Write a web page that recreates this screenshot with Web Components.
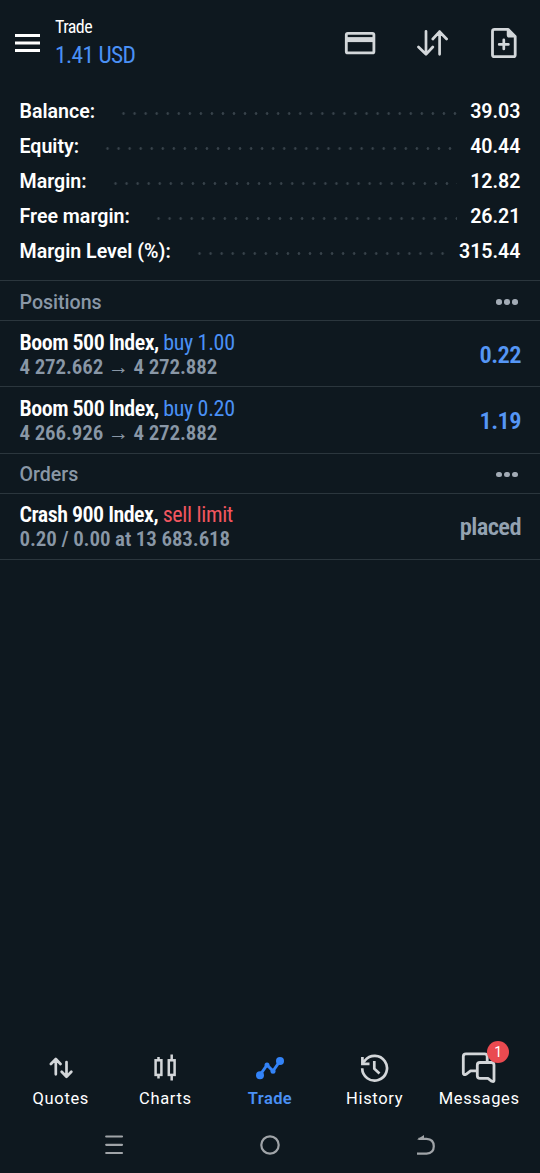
<!DOCTYPE html>
<html lang="en">
<head>
<meta charset="utf-8">
<meta name="viewport" content="width=device-width, initial-scale=1">
<title>Trade</title>
<style>
    body {
        margin: 0;
        background: #0e181f;
        font-family: Roboto, "Liberation Sans", sans-serif;
        color: #fff;
    }
</style>
</head>
<body>
<trade-app></trade-app>

<script>
const condensed = `font-family: "Roboto Condensed", Roboto, sans-serif; font-stretch: 75%;`;

const icons = {
    menu: `<svg width="26" height="18" viewBox="0 0 26 18" stroke="#fff" stroke-width="3"><path d="M0 1.5H25M0 9H25M0 16.5H25"/></svg>`,
    card: `<svg width="32" height="24" viewBox="0 0 32 24" fill="none" stroke="#d3d7da" stroke-width="2.8"><rect x="2.3" y="2.3" width="27.6" height="19.6" rx="1.5"/><path d="M2 8.6H30" stroke-width="5"/></svg>`,
    sort: `<svg width="32" height="28" viewBox="0 0 32 28" fill="none" stroke="#d3d7da" stroke-width="2.7" stroke-linecap="round" stroke-linejoin="round"><path d="M10 2.3V25M2.5 18L10 25.3L16.8 18M23.6 25.3V2.7M16.8 10L23.6 2.7L30.6 10"/></svg>`,
    newOrder: `<svg width="28" height="32" viewBox="0 0 28 32" fill="none" stroke="#d3d7da" stroke-width="2.8" stroke-linejoin="round" stroke-linecap="round"><path d="M4.5 2.3H18L25.2 9.5V28Q25.2 29.7 23.5 29.7H4.2Q2.5 29.7 2.5 28V4.3Q2.5 2.3 4.5 2.3Z"/><path d="M17.5 3V8Q17.5 9.8 19.3 9.8H25Z" fill="#d3d7da" stroke-width="1.5"/><path d="M13.8 12.8V22M9.2 17.4H18.4" stroke-width="2.7"/></svg>`,
    quotes: `<svg width="24" height="22" viewBox="0 0 24 22" fill="none" stroke="#d3d6d9" stroke-width="2.7" stroke-linecap="round" stroke-linejoin="round"><path d="M6.8 17.3V2.2M1.9 7L6.8 2L11.5 7M17.5 5V19.5M12.7 14.8L17.5 19.8L22.3 14.8"/></svg>`,
    charts: `<svg width="24" height="28" viewBox="0 0 24 28" fill="none" stroke="#d3d6d9" stroke-width="2.5"><rect x="2.6" y="6.3" width="5.8" height="14.6"/><rect x="15.8" y="6.3" width="5.8" height="14.6"/><path d="M5.5 3V6M5.5 21V24.5M18.7 .5V6M18.7 21V26.5"/></svg>`,
    trade: `<svg width="30" height="24" viewBox="0 0 30 24" fill="#3383f7" stroke="#3383f7" stroke-linejoin="round"><path d="M5 19L12 9L18 15L25 5" fill="none" stroke-width="3"/><g stroke="none"><circle cx="5" cy="19.2" r="4"/><circle cx="12" cy="9" r="2.5"/><circle cx="18" cy="15.3" r="2.5"/><circle cx="25" cy="5" r="4"/></g></svg>`,
    history: `<svg width="30" height="30" viewBox="0 0 30 30" fill="none" stroke="#d3d6d9" stroke-width="2.7"><path d="M2.2 15.3A12.4 12.4 0 1 0 4.9 7.5L2.4 10.2"/><path d="M2.4 4V10.8H9.5"/><path d="M14.3 8V15.7L19.5 20.5"/></svg>`,
    messages: `<svg width="36" height="32" viewBox="0 0 36 32" fill="none" stroke="#d3d6d9" stroke-width="2.8" stroke-linejoin="round"><path d="M15 18.9H9.5L5 22.3Q2.3 23.5 2.3 21V4.5Q2.3 1.8 5 1.8H23.5Q26.2 1.8 26.2 4.5V10"/><path d="M19 10.5H30.5Q33 10.5 33 13V28.5Q33 30.2 30.8 29.3L27 26.4H19Q16.3 26.4 16.3 23.7V13.2Q16.3 10.5 19 10.5Z"/></svg>`,
    recents: `<svg width="20" height="20" viewBox="0 0 20 20" stroke="#a0a4a8" stroke-width="2.2" stroke-linecap="round"><path d="M2.2 1.5H18M2.2 9.8H18M2.2 18H18"/></svg>`,
    home: `<svg width="20" height="20" viewBox="0 0 20 20" fill="none" stroke="#a0a4a8" stroke-width="2.2"><circle cx="10" cy="10" r="8.7"/></svg>`,
    back: `<svg width="20" height="22" viewBox="0 0 20 22" fill="none" stroke="#a0a4a8" stroke-width="2.2"><path d="M1 19.7H10.5Q17.8 19 17.8 12.2Q17.8 5.2 10.5 4.8H2.5"/><path d="M1 5.4L8 1V5.5Z" fill="#a0a4a8" stroke="none"/></svg>`
};

class AppBar extends HTMLElement {
    constructor() {
        super();
        this.attachShadow({mode: "open"}).innerHTML = `
            <style>
                :host { display: flex; align-items: center; height: 85px; padding: 0 22px 0 15px; box-sizing: border-box; }
                svg { display: block; }
                .titles { flex: 1; margin-left: 14px; ${condensed} }
                .title { font-size: 18px; line-height: 24px; letter-spacing: -.55px; }
                .profit { font-size: 23.5px; line-height: 31px; padding-top: 1px; letter-spacing: -.6px; color: #4a90f5; }
                .actions { display: flex; align-items: center; gap: 40px; }
                .actions svg:last-child { margin-left: 2px; }
            </style>
            ${icons.menu}
            <div class="titles">
                <div class="title"><slot name="title"></slot></div>
                <div class="profit"><slot name="profit"></slot></div>
            </div>
            <div class="actions">${icons.card}${icons.sort}${icons.newOrder}</div>`;
    }
}

class AccountLine extends HTMLElement {
    constructor() {
        super();
        this.attachShadow({mode: "open"}).innerHTML = `
            <style>
                :host { display: flex; align-items: center; height: 35px; font-size: 19.6px; font-weight: 650; }
                .leader {
                    flex: 1;
                    height: 3px;
                    margin: 4px 13px 0 23px;
                    background: radial-gradient(circle, #38434b 0 1px, transparent 1.6px) 0 0 / 11.05px 3px repeat-x;
                }
            </style>
            <span><slot></slot></span>
            <span class="leader"></span>
            <span><slot name="value"></slot></span>`;
    }
}

class SectionHeader extends HTMLElement {
    constructor() {
        super();
        this.attachShadow({mode: "open"}).innerHTML = `
            <style>
                :host {
                    display: flex; align-items: center; justify-content: space-between;
                    height: 40px; box-sizing: border-box; padding: 3px 22px 0 19.5px;
                    border-bottom: 1px solid #2b363d;
                    font-size: 19.6px; font-weight: 500; color: #8997a6;
                }
                .more { display: flex; gap: 2.6px; }
                .more i { width: 5.6px; height: 5.6px; border-radius: 50%; background: #a2abb5; }
            </style>
            <slot></slot>
            <span class="more"><i></i><i></i><i></i></span>`;
    }
}

class DealRow extends HTMLElement {
    constructor() {
        super();
        this.attachShadow({mode: "open"}).innerHTML = `
            <style>
                :host {
                    display: flex; align-items: center; justify-content: space-between;
                    height: 66.3px; box-sizing: border-box; padding: 2px 19px 0 19.5px;
                    border-bottom: 1px solid #2b363d;
                    ${condensed}
                    --side: #4a90f5;
                    --result: #5596f5;
                }
                :host([side="sell"]) { --side: #f2565f; --result: #93a2b1; }
                .name { font-size: 22px; line-height: 24px; font-weight: 650; letter-spacing: -.52px; }
                .side { font-weight: 400; letter-spacing: -.33px; color: var(--side); }
                .price { font-size: 21px; line-height: 24px; font-weight: 600; letter-spacing: -.12px; color: #8997a6; }
                .result { margin-top: -1px; font-size: 24.5px; font-weight: 600; letter-spacing: -.6px; color: var(--result); }
            </style>
            <div>
                <div class="name"><slot name="name"></slot> <span class="side"><slot name="side"></slot></span></div>
                <div class="price"><slot name="price"></slot></div>
            </div>
            <div class="result"><slot name="result"></slot></div>`;
    }
}

class TabItem extends HTMLElement {
    constructor() {
        super();
        const badge = this.getAttribute("badge");
        this.attachShadow({mode: "open"}).innerHTML = `
            <style>
                :host {
                    display: flex; flex-direction: column; align-items: center; width: 104.6px;
                    font-size: 16.5px; letter-spacing: .65px;
                }
                :host([active]) { color: #4a90f5; font-weight: 600; letter-spacing: .4px; }
                .icon { position: relative; display: flex; align-items: center; justify-content: center; height: 36px; }
                .badge {
                    position: absolute; top: -9px; right: -12px; width: 22px; height: 22px;
                    border-radius: 50%; background: #ea4a50;
                    font-size: 14px; line-height: 22px; text-align: center; letter-spacing: 0;
                }
                .label { line-height: 22px; margin-top: 2px; }
            </style>
            <div class="icon">${icons[this.getAttribute("icon")]}${badge ? `<span class="badge">${badge}</span>` : ""}</div>
            <div class="label"><slot></slot></div>`;
    }
}

class SystemNav extends HTMLElement {
    constructor() {
        super();
        this.attachShadow({mode: "open"}).innerHTML = `
            <style>
                :host { display: flex; align-items: center; justify-content: space-between; height: 55px; box-sizing: border-box; padding: 0 104px 1px; }
            </style>
            ${icons.recents}${icons.home}${icons.back}`;
    }
}

class TradeApp extends HTMLElement {
    constructor() {
        super();
        this.attachShadow({mode: "open"}).innerHTML = `
            <style>
                :host { display: flex; flex-direction: column; width: 540px; height: 1173px; overflow: hidden; }
                .account { padding: 9px 19.5px 11px 19.5px; border-bottom: 1px solid #2b363d; }
                main { flex: 1; }
                .tabs { display: flex; justify-content: center; height: 68px; }
            </style>
            <app-bar><span slot="title">Trade</span><span slot="profit">1.41 USD</span></app-bar>
            <main>
                <div class="account">
                    <account-line>Balance:<span slot="value">39.03</span></account-line>
                    <account-line>Equity:<span slot="value">40.44</span></account-line>
                    <account-line>Margin:<span slot="value">12.82</span></account-line>
                    <account-line>Free margin:<span slot="value">26.21</span></account-line>
                    <account-line>Margin Level (%):<span slot="value">315.44</span></account-line>
                </div>
                <section-header>Positions</section-header>
                <deal-row>
                    <span slot="name">Boom 500 Index,</span><span slot="side">buy 1.00</span>
                    <span slot="price">4 272.662 → 4 272.882</span><span slot="result">0.22</span>
                </deal-row>
                <deal-row>
                    <span slot="name">Boom 500 Index,</span><span slot="side">buy 0.20</span>
                    <span slot="price">4 266.926 → 4 272.882</span><span slot="result">1.19</span>
                </deal-row>
                <section-header>Orders</section-header>
                <deal-row side="sell">
                    <span slot="name">Crash 900 Index,</span><span slot="side">sell limit</span>
                    <span slot="price">0.20 / 0.00 at 13 683.618</span><span slot="result">placed</span>
                </deal-row>
            </main>
            <div class="tabs">
                <tab-item icon="quotes">Quotes</tab-item>
                <tab-item icon="charts">Charts</tab-item>
                <tab-item icon="trade" active>Trade</tab-item>
                <tab-item icon="history">History</tab-item>
                <tab-item icon="messages" badge="1">Messages</tab-item>
            </div>
            <system-nav></system-nav>`;
    }
}

customElements.define("app-bar", AppBar);
customElements.define("account-line", AccountLine);
customElements.define("section-header", SectionHeader);
customElements.define("deal-row", DealRow);
customElements.define("tab-item", TabItem);
customElements.define("system-nav", SystemNav);
customElements.define("trade-app", TradeApp);
</script>
</body>
</html>
